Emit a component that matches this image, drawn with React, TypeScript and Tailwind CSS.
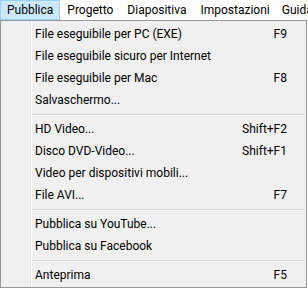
const bar = ["Pubblica", "Progetto", "Diapositiva", "Impostazioni", "Guida"];

type Item = { label: string; key?: string } | "sep";

const items: Item[] = [
  { label: "File eseguibile per PC (EXE)", key: "F9" },
  { label: "File eseguibile sicuro per Internet" },
  { label: "File eseguibile per Mac", key: "F8" },
  { label: "Salvaschermo..." },
  "sep",
  { label: "HD Video...", key: "Shift+F2" },
  { label: "Disco DVD-Video...", key: "Shift+F1" },
  { label: "Video per dispositivi mobili..." },
  { label: "File AVI...", key: "F7" },
  "sep",
  { label: "Pubblica su YouTube..." },
  { label: "Pubblica su Facebook" },
  "sep",
  { label: "Anteprima", key: "F5" },
];

export default function App() {
  return (
    <div className="w-[308px] h-[289px] overflow-hidden bg-white text-[12px] text-black font-['Segoe_UI','Roboto',sans-serif]">
      <div className="flex h-[20px] bg-white whitespace-nowrap">
        {bar.map((b, i) => (
          <div
            key={b}
            className={`flex items-center ${i === 0 ? "bg-[#cce8ff] border border-[#99d1ff] px-[6px]" : "px-[7px]"} ${i === 3 ? "pr-[5px]" : ""}`}
          >
            {b}
          </div>
        ))}
      </div>

      <div className="relative w-[307px] border border-[#979797] bg-[#f0f0f0] pt-[2px] pb-[1px]">
        <div className="absolute top-0 bottom-0 left-[29px] w-px bg-[#e2e3e3]" />
        <div className="absolute top-0 bottom-0 left-[30px] w-px bg-white" />
        {items.map((it, i) =>
          it === "sep" ? (
            <div key={i} className="h-[7px] flex flex-col justify-center pl-[31px] pr-[2px]">
              <div className="h-px bg-[#d7d7d7]" />
              <div className="h-px bg-white" />
            </div>
          ) : (
            <div key={i} className="flex items-center h-[22px] pl-[34px] pr-[19px] whitespace-nowrap">
              <span className="flex-1">{it.label}</span>
              {it.key && <span>{it.key}</span>}
            </div>
          )
        )}
      </div>
    </div>
  );
}
